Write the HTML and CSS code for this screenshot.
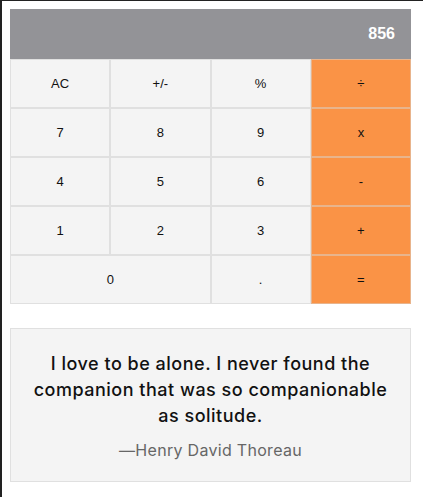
FILE: index.html
```html
<!DOCTYPE html>
<html lang="en">
<head>
<meta charset="utf-8">
<title>Calculator</title>
<link rel="stylesheet" href="styles.css">
</head>
<body>
<div class="calculator">
  <div class="display">856</div>
  <div class="keys">
    <button class="key">AC</button>
    <button class="key">+/-</button>
    <button class="key">%</button>
    <button class="key op">÷</button>
    <button class="key">7</button>
    <button class="key">8</button>
    <button class="key">9</button>
    <button class="key op">x</button>
    <button class="key">4</button>
    <button class="key">5</button>
    <button class="key">6</button>
    <button class="key op">-</button>
    <button class="key">1</button>
    <button class="key">2</button>
    <button class="key">3</button>
    <button class="key op">+</button>
    <button class="key wide">0</button>
    <button class="key">.</button>
    <button class="key op">=</button>
  </div>
</div>
<div class="quote">
  <p class="quote-text">I love to be alone. I never found the companion that was so companionable as solitude.</p>
  <p class="quote-author">—Henry David Thoreau</p>
</div>
</body>
</html>
```

FILE: styles.css
```css
html {
  border-left: 2px solid #222;
  border-top: 1px solid #222;
  background: #fff;
  min-height: 100%;
  box-sizing: border-box;
}
body {
  margin: 8px;
  font-family: "Liberation Sans", Arial, sans-serif;
}
.calculator {
  width: 401px;
}
.display {
  background: #939397;
  color: #fff;
  font-weight: bold;
  font-size: 16px;
  height: 50px;
  display: flex;
  align-items: center;
  justify-content: flex-end;
  padding-right: 16px;
  box-sizing: border-box;
}
.keys {
  display: grid;
  grid-template-columns: repeat(4, 1fr);
}
.key {
  height: 49px;
  box-sizing: border-box;
  border: 1px solid #e0e0e0;
  background: #f4f4f4;
  font-family: "Liberation Sans", Arial, sans-serif;
  font-size: 13px;
  color: #111;
  padding: 0;
  margin: 0;
}
.key.op {
  background: #fa9346;
  border-color: #e8b48c;
}
.key.wide {
  grid-column: span 2;
}
.quote {
  width: 401px;
  box-sizing: border-box;
  margin-top: 24px;
  background: #f4f4f4;
  border: 1px solid #e0e0e0;
  padding: 22px 20px 19px;
  text-align: center;
  font-family: Inter, "DejaVu Sans", sans-serif;
}
.quote-text {
  margin: 0;
  font-size: 18px;
  line-height: 26px;
  font-weight: 500;
  letter-spacing: 0.5px;
  color: #111;
}
.quote-author {
  margin: 9px 0 0;
  font-size: 16px;
  line-height: 24px;
  letter-spacing: 0.3px;
  color: #666;
}
```
